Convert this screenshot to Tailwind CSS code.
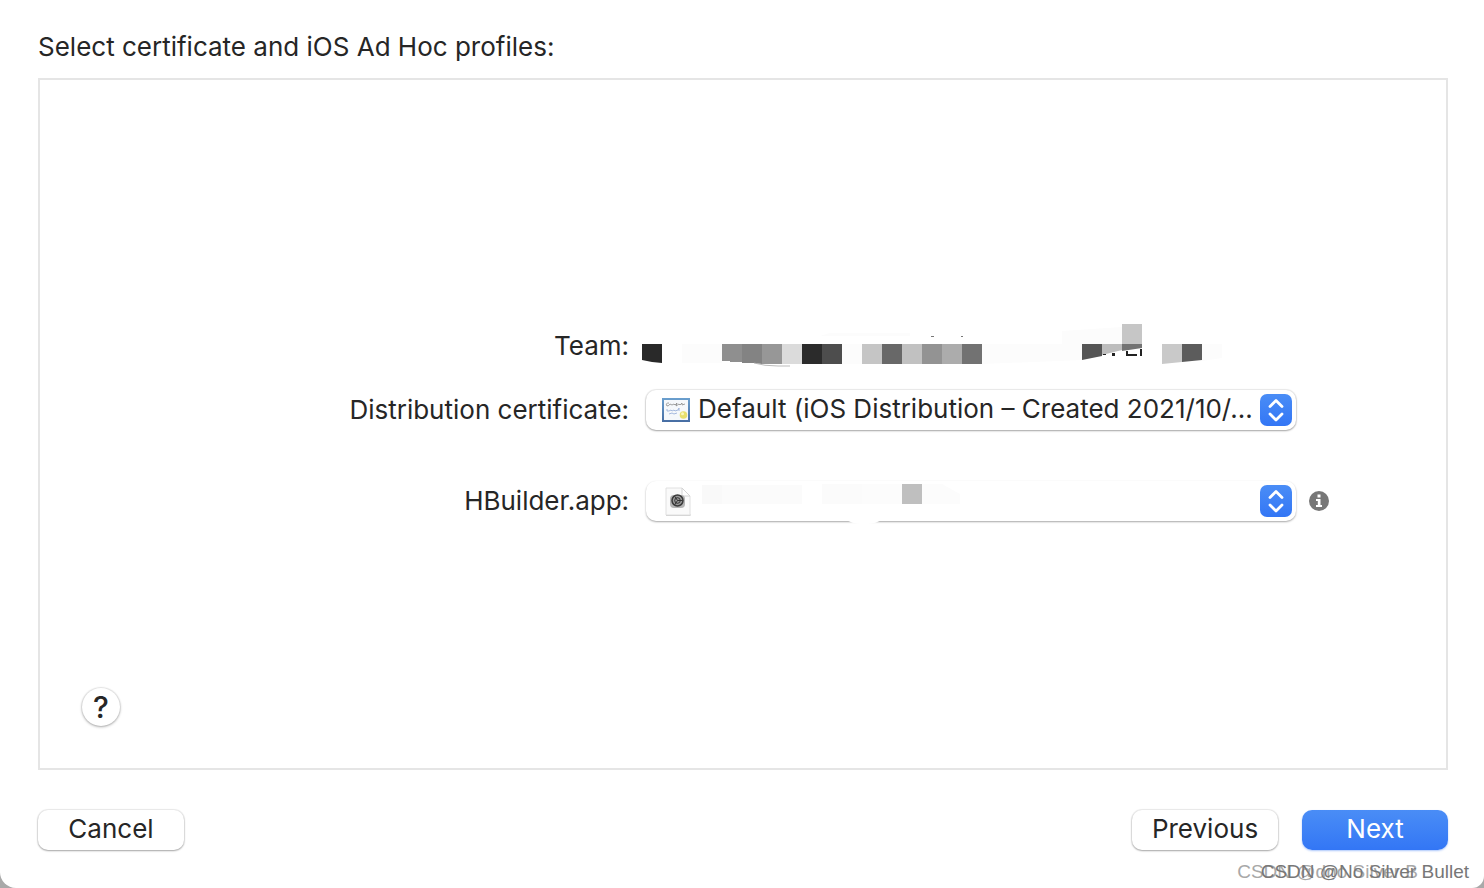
<!DOCTYPE html>
<html lang="en">
<head>
  <meta charset="UTF-8">
  <meta name="viewport" content="width=device-width, initial-scale=1.0">
  <title>Select certificate and iOS Ad Hoc profiles</title>
  <script src="https://cdn.jsdelivr.net/npm/@tailwindcss/browser@4"></script>
</head>
<body class="bg-[#a9a9a9] font-[Inter,sans-serif] text-[#262626] text-[26px] leading-8">
  <main class="relative flex flex-col min-h-screen bg-white rounded-bl-[16px] rounded-br-[12px] overflow-hidden pl-[38px] pr-9 pt-[31px] pb-[38px]">
    <h1>Select certificate and iOS Ad Hoc profiles:</h1>

    <section class="flex-1 flex flex-col mt-[15px] border-2 border-[#e5e5e5] pt-[77px] pb-[42px]">
      <form id="profiles" class="flex-1 flex flex-col justify-center">
        <!-- team -->
        <div class="flex items-center gap-x-[17px] mb-[22px]">
          <span class="w-[41.9%] text-right">Team:</span>
          <svg class="-ml-1.5 h-11 w-[584px]" viewBox="640 324 584 44" aria-label="Team name hidden">
            <path fill="#fcfcfc" d="M682 344h40v19h-40zM842 344h20v20h-20zM982 344h100v16l-100 4zM1062 331l60-4v17h-60zM1202 344h20v14l-20 3zM820 336l10-3h80v3z"/>
            <path fill="#292929" d="M642 344h20v19l-10-1-10-2z"/>
            <path fill="#8f8f8f" d="M722 344h20v18h-12v-1h-8z"/>
            <path fill="#838383" d="M742 344h20v20l-8-1h-12z"/>
            <path fill="#979797" d="M762 344h20v20h-20z"/>
            <path fill="#dbdbdb" d="M782 344h20v20h-20z"/>
            <path fill="#2b2b2b" d="M802 344h20v20h-20z"/>
            <path fill="#4d4d4d" d="M822 344h20v20h-20z"/>
            <path fill="#c5c5c5" d="M862 344h20v20h-20z"/>
            <path fill="#686868" d="M882 344h20v20h-20z"/>
            <path fill="#c1c1c1" d="M902 344h20v20h-20z"/>
            <path fill="#939393" d="M922 344h20v20h-20z"/>
            <path fill="#acacac" d="M942 344h20v20h-20z"/>
            <path fill="#727272" d="M962 344h20v20h-20z"/>
            <path fill="none" stroke="#aaa" stroke-width=".8" d="M754 363q10 3 24 3h12"/>
            <path fill="#777" d="M931 336h3v1h-3zM961 336h2v1h-2z"/>
            <path fill="#555" d="M1082 344h20v12l-20 4z"/>
            <path fill="#bdbdbd" d="M1102 344h20v6l-20 5z"/>
            <path fill="#c6c6c6" d="M1122 324h20v20h-20z"/>
            <path fill="#737373" d="M1122 344h20v4l-20 3z"/>
            <path fill="#222" d="M1103 354h3v1h-3zM1112 353h3v3h-3zM1126 351h2v3h9v2h-11zM1140 349h2v7h-2z"/>
            <path fill="#c9c9c9" d="M1162 344h20v18l-20 2z"/>
            <path fill="#5c5c5c" d="M1182 344h20v16l-20 2z"/>
          </svg>
        </div>

        <!-- certificate -->
        <div class="flex items-center gap-x-[17px] mb-[51px]">
          <label for="certificate" class="w-[41.9%] text-right">Distribution certificate:</label>
          <div class="relative w-[650px]">
            <select id="certificate" class="appearance-none block w-full h-10 pl-[52px] pr-10 pb-0.5 rounded-[10px] bg-white truncate shadow-[0_0_1px_1px_rgba(0,0,0,0.08),0_1px_2px_rgba(0,0,0,0.3)]">
              <option>Default (iOS Distribution – Created 2021/10/...</option>
            </select>
            <svg class="absolute left-4 top-2 w-7 h-6 pointer-events-none" viewBox="0 0 28 24">
              <defs>
                <linearGradient id="frame" x2="0" y2="1">
                  <stop stop-color="#6a9fce"/>
                  <stop offset="1" stop-color="#466da3"/>
                </linearGradient>
              </defs>
              <path fill="url(#frame)" d="M0 0h28v24H0z"/>
              <path fill="#f5f8fb" d="M2 2h24v20H2z"/>
              <path fill="none" stroke="#888" stroke-width=".8" d="M7 5q-4 0-2 3 2 0 3-2l2 1 2-1 1 1 2-2-1 3 3-2 1 1 2-2 0 2 3-1"/>
              <path fill="none" stroke="#8fa8d6" stroke-width=".8" d="M5 11q-1 3 2 2l2-1 1 1 2-1 1 1 3-1 1-2v3M7 16l3-1 2 1 3-1"/>
              <circle cx="21.500" cy="17" r="3.800" fill="#e8e06c"/>
              <circle cx="20.500" cy="15.800" r="1.500" fill="#faf7bd"/>
            </svg>
            <svg class="absolute right-1 top-1 size-8 pointer-events-none" viewBox="0 0 32 32">
              <defs>
                <linearGradient id="blue" x2="0" y2="1">
                  <stop stop-color="#4a8df6"/>
                  <stop offset="1" stop-color="#3376f5"/>
                </linearGradient>
              </defs>
              <rect width="32" height="32" rx="7" fill="url(#blue)"/>
              <path fill="none" stroke="#fff" stroke-width="2.800" stroke-linecap="round" stroke-linejoin="round" d="m10 12.500 6-6 6 6M10 20l6 6 6-6"/>
            </svg>
          </div>
        </div>

        <!-- app profile -->
        <div class="flex items-center gap-x-[17px]">
          <label for="profile" class="w-[41.9%] text-right">HBuilder.app:</label>
          <div class="flex items-center gap-x-[13px]">
            <div class="relative w-[650px]">
              <select id="profile" class="appearance-none block w-full h-10 pl-[52px] pr-10 rounded-[10px] bg-white shadow-[0_1px_2px_rgba(0,0,0,0.35)]">
                <option></option>
              </select>
              <svg class="absolute left-[18px] top-[5px] w-[30px] h-8 pointer-events-none" viewBox="0 0 30 32">
                <path fill="#ccc" d="M2 28h24.500v2H2z"/>
                <path fill="#fafafa" stroke="#e0e0e0" d="M2 2h16l8 8v19H2z"/>
                <path fill="#fff" stroke="#d4d4d4" d="M18 2v8h8z"/>
                <rect x="6" y="9" width="15" height="13" rx="4" fill="#b5b5b5"/>
                <circle cx="13.500" cy="14.500" r="5.500" fill="#999" stroke="#3a3a3a" stroke-width="1.500"/>
                <circle cx="13.500" cy="14.500" r="2.800" fill="none" stroke="#333"/>
                <path fill="none" stroke="#333" d="M13.500 14.500h5M13.500 14.500 11 10.500M13.500 14.500 11 18.500"/>
              </svg>
              <svg class="absolute left-[54px] top-0 w-[262px] h-11 pointer-events-none" viewBox="700 481 262 44">
                <path fill="#fbfbfb" d="M702 485h100v19H702zM822 484h40v20h-40z"/>
                <path fill="#f9f9f9" d="M702 485h20v19h-20z"/>
                <path fill="#fcfcfc" d="M862 484h40v20h-40zM922 484h20l18 10v10h-38z"/>
                <path fill="#bfbfbf" d="M902 484h20v20h-20z"/>
                <path fill="#fff" d="M846 519h36q-4 5-18 5t-18-5z"/>
              </svg>
              <svg class="absolute right-1 top-1 size-8 pointer-events-none" viewBox="0 0 32 32">
                <rect width="32" height="32" rx="7" fill="url(#blue)"/>
                <path fill="none" stroke="#fff" stroke-width="2.800" stroke-linecap="round" stroke-linejoin="round" d="m10 12.500 6-6 6 6M10 20l6 6 6-6"/>
              </svg>
            </div>
            <button type="button" aria-label="Profile info">
              <svg class="block size-5" viewBox="0 0 20 20">
                <circle cx="10" cy="10" r="10" fill="#777"/>
                <path fill="#fff" d="M8.500 3.500h3v3h-3zM7 8h4.500v6H13v2H7v-2h1.800v-4H7z"/>
              </svg>
            </button>
          </div>
        </div>
      </form>

      <button type="button" aria-label="Help" class="ml-[42px] size-[38px] rounded-full bg-white font-medium text-[30px] leading-[38px] shadow-[0_0_1px_1px_rgba(0,0,0,0.07),0_1px_3px_rgba(0,0,0,0.3)]">?</button>
    </section>

    <footer class="flex items-center mt-10">
      <button type="button" class="w-[146px] h-10 pb-0.5 rounded-[10px] bg-white shadow-[0_0_1px_1px_rgba(0,0,0,0.08),0_1px_2px_rgba(0,0,0,0.3)]">Cancel</button>
      <button type="button" class="ml-auto w-[146px] h-10 pb-0.5 rounded-[10px] bg-white shadow-[0_0_1px_1px_rgba(0,0,0,0.08),0_1px_2px_rgba(0,0,0,0.3)]">Previous</button>
      <button type="submit" form="profiles" class="ml-6 w-[146px] h-10 pb-0.5 rounded-[10px] bg-linear-to-b from-[#4a8df6] to-[#3376f5] text-white shadow-[0_1px_2px_rgba(51,118,245,0.4)]">Next</button>
    </footer>
  </main>

  <!-- watermark, stamped twice -->
  <div class="absolute right-[66px] bottom-1 font-['Liberation_Sans',sans-serif] text-[19px] leading-6 text-[#a8a8a8]">CSDN @dno Silver B</div>
  <div class="absolute right-[15px] bottom-1 font-['Liberation_Sans',sans-serif] text-[19px] leading-6 text-[#777]">CSDN @No Silver Bullet</div>
</body>
</html>
